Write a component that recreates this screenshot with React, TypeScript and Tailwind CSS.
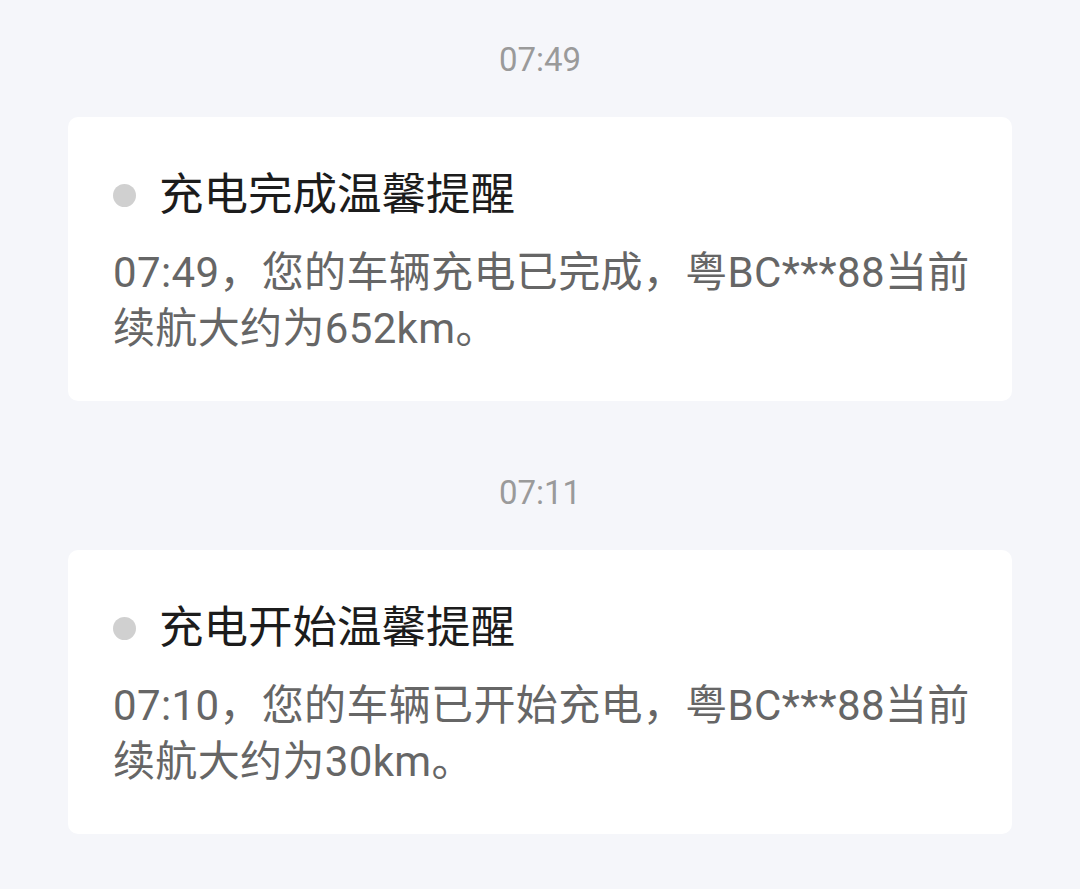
import React from "react";

const FONT = { fontFamily: 'Roboto, "Noto Sans CJK SC", sans-serif' };

type Msg = { time: string; title: string; lines: string[] };

const msgs: Msg[] = [
  {
    time: "07:49",
    title: "充电完成温馨提醒",
    lines: ["07:49，您的车辆充电已完成，粤BC***88当前", "续航大约为652km。"],
  },
  {
    time: "07:11",
    title: "充电开始温馨提醒",
    lines: ["07:10，您的车辆已开始充电，粤BC***88当前", "续航大约为30km。"],
  },
];

export default function App() {
  return (
    <div
      className="w-[1080px] h-[889px] overflow-hidden bg-[#f5f6fa] px-[68px] pt-[40px]"
      style={FONT}
    >
      {msgs.map((m, i) => (
        <div key={i} className={i > 0 ? "mt-[72px]" : ""}>
          <div className="text-center text-[33px] leading-[40px] text-[#9a9a9a]">
            {m.time}
          </div>
          <div className="mt-[37px] rounded-[10px] bg-white px-[45px] pt-[48px] pb-[44px]">
            <div className="flex items-center h-[60px]">
              <span className="w-[23px] h-[23px] rounded-full bg-[#d0d0d0] shrink-0" />
              <span className="ml-[23px] text-[44.5px] leading-[60px] text-[#1c1c1c]">
                {m.title}
              </span>
            </div>
            <div className="mt-[20px] text-[42px] leading-[56px] tracking-[0.35px] text-[#666666]">
              {m.lines.map((l, j) => (
                <div key={j} className="whitespace-nowrap">
                  {l}
                </div>
              ))}
            </div>
          </div>
        </div>
      ))}
    </div>
  );
}
